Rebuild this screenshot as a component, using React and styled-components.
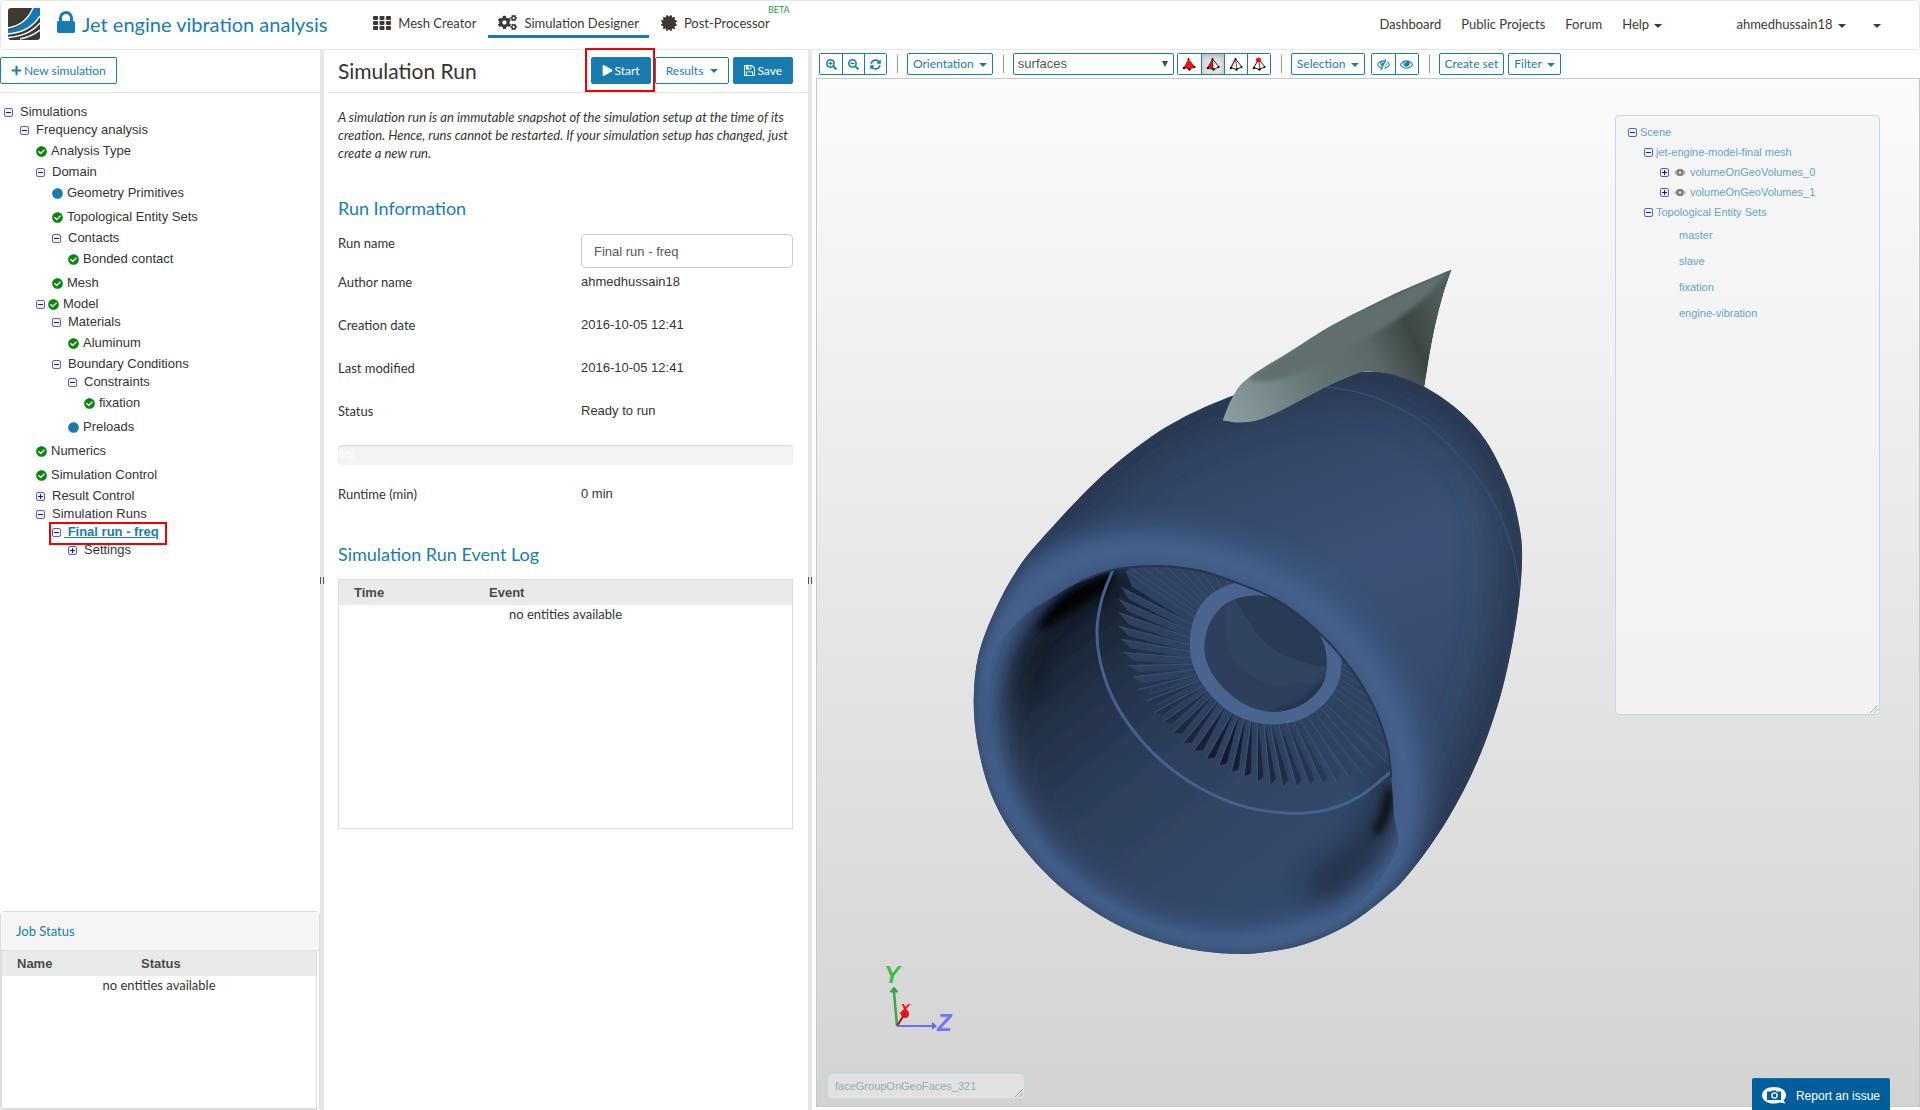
import React from 'react';
import styled, { createGlobalStyle, css } from 'styled-components';
import {
  FaCertificate,
  FaCheckCircle,
  FaCircle,
  FaCogs,
  FaPlay,
  FaPlus,
  FaSearchMinus,
  FaSearchPlus,
  FaSyncAlt,
} from 'react-icons/fa';

const BLUE = '#187cb0';
const DARK = '#3c3835';

const simulationTree = [
  { level: 0, name: 'Simulations', toggle: 'minus' },
  { level: 1, name: 'Frequency analysis', toggle: 'minus' },
  { level: 2, name: 'Analysis Type', status: 'done' },
  { level: 2, name: 'Domain', toggle: 'minus' },
  { level: 3, name: 'Geometry Primitives', status: 'open' },
  { level: 3, name: 'Topological Entity Sets', status: 'done' },
  { level: 3, name: 'Contacts', toggle: 'minus' },
  { level: 4, name: 'Bonded contact', status: 'done' },
  { level: 3, name: 'Mesh', status: 'done' },
  { level: 2, name: 'Model', toggle: 'minus', status: 'done' },
  { level: 3, name: 'Materials', toggle: 'minus' },
  { level: 4, name: 'Aluminum', status: 'done' },
  { level: 3, name: 'Boundary Conditions', toggle: 'minus' },
  { level: 4, name: 'Constraints', toggle: 'minus' },
  { level: 5, name: 'fixation', status: 'done' },
  { level: 4, name: 'Preloads', status: 'open' },
  { level: 2, name: 'Numerics', status: 'done' },
  { level: 2, name: 'Simulation Control', status: 'done' },
  { level: 2, name: 'Result Control', toggle: 'plus' },
  { level: 2, name: 'Simulation Runs', toggle: 'minus' },
  { level: 3, name: 'Final run - freq', toggle: 'minus', active: true },
  { level: 4, name: 'Settings', toggle: 'plus' },
];

const sceneTree = [
  { level: 0, name: 'Scene', toggle: 'minus' },
  { level: 1, name: 'jet-engine-model-final mesh', toggle: 'minus' },
  { level: 2, name: 'volumeOnGeoVolumes_0', toggle: 'plus', eye: true },
  { level: 2, name: 'volumeOnGeoVolumes_1', toggle: 'plus', eye: true },
  { level: 1, name: 'Topological Entity Sets', toggle: 'minus' },
  { level: 2, name: 'master' },
  { level: 2, name: 'slave' },
  { level: 2, name: 'fixation' },
  { level: 2, name: 'engine-vibration' },
];

const runInfo = [
  ['Author name', 'ahmedhussain18'],
  ['Creation date', '2016-10-05 12:41'],
  ['Last modified', '2016-10-05 12:41'],
  ['Status', 'Ready to run'],
];

export default function App() {
  return (
    <>
      <GlobalStyle />
      <Page>
        <Header />
        <Workspace>
          <Sidebar />
          <Splitter />
          <RunPanel />
          <Splitter />
          <Viewer />
        </Workspace>
      </Page>
    </>
  );
}

function Header() {
  return (
    <TopBar>
      <Logo />
      <ProjectTitle>
        <LockIcon />
        Jet engine vibration analysis
      </ProjectTitle>
      <MainNav>
        <NavTab href="#mesh">
          <GridIcon />
          Mesh Creator
        </NavTab>
        <NavTab href="#designer" $active>
          <FaCogs size={19} />
          Simulation Designer
        </NavTab>
        <NavTab href="#post">
          <FaCertificate size={16} />
          Post-Processor
          <Beta>BETA</Beta>
        </NavTab>
      </MainNav>
      <UserNav>
        <a href="#dashboard">Dashboard</a>
        <a href="#projects">Public Projects</a>
        <a href="#forum">Forum</a>
        <a href="#help">
          Help <Caret />
        </a>
        <UserLink href="#user">
          ahmedhussain18 <Caret />
        </UserLink>
        <a href="#more" aria-label="More">
          <Caret />
        </a>
      </UserNav>
    </TopBar>
  );
}

function Sidebar() {
  return (
    <SidePane>
      <PaneHead>
        <Button type="button">
          <FaPlus size={11} />
          New simulation
        </Button>
      </PaneHead>
      <Tree>
        {simulationTree.map((node) => (
          <TreeItem key={node.name} $level={node.level} $leaf={!node.toggle}>
            {node.toggle && <Toggle type={node.toggle} />}
            {node.status && (
              <Status $done={node.status === 'done'} $after={!!node.toggle}>
                {node.status === 'done' ? <FaCheckCircle /> : <FaCircle />}
              </Status>
            )}
            {node.active ? (
              <ActiveNode href="#run">&nbsp;{node.name}</ActiveNode>
            ) : (
              <NodeName $wide={!node.status}>{node.name}</NodeName>
            )}
            {node.active && <Highlight $tree />}
          </TreeItem>
        ))}
      </Tree>
      <JobStatus>
        <JobTitle>Job Status</JobTitle>
        <JobBody>
          <EntityTable columns={['Name', 'Status']} first={124} />
        </JobBody>
      </JobStatus>
    </SidePane>
  );
}

function RunPanel() {
  return (
    <RunPane>
      <PaneHead $inset>
        <Title>Simulation Run</Title>
        <Actions>
          <StartWrap>
            <Button type="button" $primary>
              <FaPlay size={11} />
              Start
            </Button>
            <Highlight />
          </StartWrap>
          <Button type="button">
            Results <Caret />
          </Button>
          <Button type="button" $primary>
            <SaveIcon />
            Save
          </Button>
        </Actions>
      </PaneHead>
      <RunBody>
        <Hint>
          A simulation run is an immutable snapshot of the simulation setup at the time of its
          creation. Hence, runs cannot be restarted. If your simulation setup has changed, just
          create a new run.
        </Hint>
        <SectionTitle>Run Information</SectionTitle>
        <Field $first>
          <label htmlFor="run-name">Run name</label>
          <TextInput id="run-name" defaultValue="Final run - freq" />
        </Field>
        {runInfo.map(([label, value]) => (
          <Field key={label}>
            <span>{label}</span>
            <Value>{value}</Value>
          </Field>
        ))}
        <Progress>0%</Progress>
        <Field>
          <span>Runtime (min)</span>
          <Value>0 min</Value>
        </Field>
        <SectionTitle $log>Simulation Run Event Log</SectionTitle>
        <LogBox>
          <EntityTable columns={['Time', 'Event']} first={135} />
        </LogBox>
      </RunBody>
    </RunPane>
  );
}

function EntityTable({ columns, first }) {
  return (
    <Table $first={first}>
      <thead>
        <tr>
          {columns.map((name) => (
            <th key={name}>{name}</th>
          ))}
        </tr>
      </thead>
      <tbody>
        <tr>
          <td colSpan={2}>no entities available</td>
        </tr>
      </tbody>
    </Table>
  );
}

function Viewer() {
  return (
    <ViewPane>
      <Toolbar>
        <Group>
          <Tool type="button" aria-label="Zoom in" $narrow>
            <FaSearchPlus size={11} />
          </Tool>
          <Tool type="button" aria-label="Zoom out" $narrow>
            <FaSearchMinus size={11} />
          </Tool>
          <Tool type="button" aria-label="Reset view" $narrow>
            <FaSyncAlt size={11} />
          </Tool>
        </Group>
        <Divider />
        <SmallButton type="button">
          Orientation <Caret />
        </SmallButton>
        <Divider />
        <SelectWrap>
          <select aria-label="Render mode" defaultValue="surfaces">
            <option value="surfaces">surfaces</option>
          </select>
        </SelectWrap>
        <Group $gap={3}>
          {['volume', 'face', 'edge', 'node'].map((kind) => (
            <Tool key={kind} type="button" aria-label={`Pick ${kind}`} $pressed={kind === 'face'}>
              <PickIcon kind={kind} />
            </Tool>
          ))}
        </Group>
        <Divider />
        <SmallButton type="button">
          Selection <Caret />
        </SmallButton>
        <Group $gap={6}>
          <Tool type="button" aria-label="Hide selection">
            <EyeIcon slash />
          </Tool>
          <Tool type="button" aria-label="Show selection">
            <EyeIcon />
          </Tool>
        </Group>
        <Divider />
        <SmallButton type="button">Create set</SmallButton>
        <SmallButton type="button" $next>
          Filter <Caret />
        </SmallButton>
      </Toolbar>
      <Canvas>
        <EngineModel />
        <ScenePanel>
          {sceneTree.map((node) => (
            <SceneItem key={node.name} $level={node.level} $leaf={!node.toggle}>
              {node.toggle && <Toggle type={node.toggle} />}
              {node.eye && <SceneEye />}
              <span>{node.name}</span>
            </SceneItem>
          ))}
          <Grip />
        </ScenePanel>
        <PickedFace>
          faceGroupOnGeoFaces_321
          <Grip />
        </PickedFace>
      </Canvas>
      <Report type="button">
        <ReportIcon />
        Report an issue
      </Report>
    </ViewPane>
  );
}

/* icons */

function Logo() {
  return (
    <svg width="32" height="32" viewBox="0 0 32 32" aria-label="Logo">
      <rect width="32" height="32" rx="3" fill="#3e3935" />
      <path d="M24 0h8v7C25 19 14 25 0 27v-5C12 20 20 12 24 0z" fill="#0f7ab5" />
      <path d="M25 0C20 12 12 18 0 20M32 8C25 19 14 25 0 26M32 15C24 24 15 28 0 29.500M32 22c-5 4-11 7-20 9" fill="none" stroke="#fff" strokeWidth="1.400" />
    </svg>
  );
}

function LockIcon() {
  return (
    <svg width="18" height="22" viewBox="320 128 1152 1408" fill="currentColor">
      <path d="M640 768h512v-192q0-106-75-181t-181-75-181 75-75 181v192zm832 96v576q0 40-28 68t-68 28h-960q-40 0-68-28t-28-68v-576q0-40 28-68t68-28h32v-192q0-184 132-316t316-132 316 132 132 316v192h32q40 0 68 28t28 68z" />
    </svg>
  );
}

function GridIcon() {
  return (
    <svg width="18" height="14" viewBox="0 0 18 14" fill="currentColor">
      {[0, 5, 10].map((y) =>
        [0, 6.5, 13].map((x) => <rect key={`${x}-${y}`} x={x} y={y} width="5" height="4" rx="1" />)
      )}
    </svg>
  );
}

function SaveIcon() {
  return (
    <svg width="11" height="11" viewBox="128 128 1536 1536" fill="currentColor">
      <path d="M512 1536h768v-384h-768v384zm896 0h128v-896q0-14-10-38.500t-20-34.500l-281-281q-10-10-34-20t-39-10v416q0 40-28 68t-68 28h-576q-40 0-68-28t-28-68v-416h-128v1280h128v-416q0-40 28-68t68-28h832q40 0 68 28t28 68v416zm-384-928v-320q0-13-9.500-22.500t-22.500-9.500h-192q-13 0-22.500 9.500t-9.500 22.500v320q0 13 9.500 22.500t22.500 9.500h192q13 0 22.500-9.500t9.500-22.500zm640 32v928q0 40-28 68t-68 28h-1344q-40 0-68-28t-28-68v-1344q0-40 28-68t68-28h928q40 0 88 20t76 48l280 280q28 28 48 76t20 88z" />
    </svg>
  );
}

function EyeIcon({ slash }) {
  return (
    <svg width="13" height="13" viewBox="0 64 1792 1792" fill="currentColor">
      <path d="M1664 960q-152-236-381-353 61 104 61 225 0 185-131.500 316.500t-316.500 131.500-316.500-131.500-131.500-316.500q0-121 61-225-229 117-381 353 133 205 333.500 326.500t434.500 121.500 434.500-121.500 333.500-326.500zm-720-384q0-20-14-34t-34-14q-125 0-214.500 89.500t-89.500 214.500q0 20 14 34t34 14 34-14 14-34q0-86 61-147t147-61q20 0 34-14t14-34zm848 384q0 34-20 69-140 230-376.500 368.500t-499.500 138.500-499.500-139-376.500-368q-20-35-20-69t20-69q140-229 376.500-368t499.500-139 499.500 139 376.500 368q20 35 20 69z" />
      {slash && (
        <>
          <path d="M660 1680 1340 260" stroke="#fff" strokeWidth="420" />
          <path d="M540 1680 1220 260" stroke="currentColor" strokeWidth="190" />
        </>
      )}
    </svg>
  );
}

function SceneEye() {
  return (
    <svg width="12" height="9" viewBox="0 0 12 9">
      <path d="M0 4.500C3-.5 9-.5 12 4.500 9 9.500 3 9.500 0 4.500z" fill="#bbbbb4" />
      <circle cx="6" cy="4.500" r="3.500" fill="#7c7c74" />
      <circle cx="6" cy="4.500" r="1.200" fill="#eee" />
    </svg>
  );
}

function PickIcon({ kind }) {
  const red = '#f30c0c';
  return (
    <svg width="14" height="14" viewBox="0 0 14 14" strokeLinejoin="round">
      <path d="M6.500 2 13 10 7 12.500 2 10.500z" fill={kind === 'volume' ? red : '#fff'} stroke="#222" strokeWidth={kind === 'volume' ? 0.4 : 1} />
      {kind === 'face' && <path d="M6.500 2 7 12 2 10.500z" fill={red} />}
      {kind === 'face' && <path d="M6.500 2 7 12" stroke="#222" />}
      {(kind === 'edge' || kind === 'node') && (
        <path d="M6.500 2 8 12" fill="none" stroke="#222" strokeWidth=".8" />
      )}
      {kind === 'edge' && <path d="M6.500 2 2 10.500" stroke={red} strokeWidth="1.200" />}
      {kind === 'node' && <circle cx="6.500" cy="3" r="2.500" fill={red} />}
      <circle cx="2" cy="11" r="1.300" fill="#111" />
      <circle cx="7.500" cy="12.500" r="1.200" fill="#111" />
      <circle cx="12.500" cy="10" r="1.100" fill="#111" />
      {kind !== 'node' && <circle cx="6.500" cy="2" r="1" fill="#111" />}
    </svg>
  );
}

function Toggle({ type }) {
  return (
    <ToggleButton type="button" aria-label={type === 'minus' ? 'Collapse' : 'Expand'}>
      <svg width="9" height="9" viewBox="0 0 9 9">
        <rect x=".5" y=".5" width="8" height="8" rx="1.500" fill="#f4f4fa" stroke="#5a62ae" />
        <path d={type === 'minus' ? 'M2 4.500h5' : 'M2 4.500h5M4.500 2v5'} stroke="#1010c8" />
      </svg>
    </ToggleButton>
  );
}

function Grip() {
  return (
    <GripSvg width="8" height="8" viewBox="0 0 8 8">
      <path d="M.5 7.500l7-7M4.500 7.500l3-3" stroke="#666" strokeDasharray="1 .6" />
    </GripSvg>
  );
}

function ReportIcon() {
  return (
    <svg width="24" height="17" viewBox="0 0 24 17">
      <path d="M12 0C19 0 24 3 24 8c0 2-1 4-2.500 5.500L23.500 16.500 18 15.500C16.500 16 14 16.500 12 16.500 5 16.500 0 13 0 8.200S5 0 12 0z" fill="#fff" />
      <path d="M5 4.500h4l1-1h4v1h5v8.500H5z" fill="#005e9b" />
      <circle cx="12.500" cy="8.500" r="2.600" fill="none" stroke="#fff" strokeWidth="1.400" />
    </svg>
  );
}

/* engine model */

// model space is stretched a little against the canvas
const place = ([x, y]) => [133 + x * 0.3827, 171 + y * 0.4592];
const fmt = ([x, y]) => `${x.toFixed(1)} ${y.toFixed(1)}`;

// Catmull-Rom spline through the given points
function curve(points, closed = false) {
  const p = points.map(place);
  const n = p.length;
  const at = (i) => (closed ? p[(i + n) % n] : p[Math.max(0, Math.min(n - 1, i))]);
  let d = `M${fmt(p[0])}`;
  for (let i = 0; i < (closed ? n : n - 1); i += 1) {
    const [a, b, c, e] = [at(i - 1), at(i), at(i + 1), at(i + 2)];
    const c1 = [b[0] + (c[0] - a[0]) / 6, b[1] + (c[1] - a[1]) / 6];
    const c2 = [c[0] - (e[0] - b[0]) / 6, c[1] - (e[1] - b[1]) / 6];
    d += `C${fmt(c1)} ${fmt(c2)} ${fmt(c)}`;
  }
  return closed ? `${d}Z` : d;
}

// several splines in a row, with a sharp corner where they meet
const outline = (...parts) =>
  `${parts.map((points, i) => (i ? curve(points).replace('M', 'L') : curve(points))).join('')}Z`;

const poly = (points) => `M${points.map((pt) => fmt(place(pt))).join('L')}Z`;

const hull = curve([
  [62, 980], [75, 880], [120, 780], [180, 690], [260, 610], [380, 505], [500, 422], [600, 369],
  [740, 317], [900, 275], [1090, 265], [1165, 272], [1240, 298], [1330, 350], [1400, 415],
  [1458, 510], [1485, 590], [1495, 670], [1481, 800], [1442, 960], [1380, 1110], [1300, 1240],
  [1200, 1358], [1130, 1415], [1040, 1470], [940, 1508], [850, 1526], [740, 1533], [600, 1518],
  [450, 1475], [300, 1395], [180, 1290], [110, 1190], [73, 1080],
], true);

const rim = curve([
  [88, 960], [122, 860], [190, 765], [290, 695], [410, 660], [540, 652], [700, 676], [850, 726],
  [990, 808], [1100, 920], [1165, 1040], [1188, 1180], [1165, 1305], [1085, 1410], [950, 1482],
  [760, 1516], [560, 1496], [400, 1436], [250, 1336], [140, 1198], [90, 1070],
], true);

const mouth = curve([
  [75, 980], [110, 880], [190, 800], [270, 755], [350, 718], [430, 696], [540, 688], [650, 698],
  [750, 725], [860, 765], [960, 830], [1050, 915], [1110, 1000], [1143, 1080], [1153, 1150],
  [1160, 1230], [1165, 1310], [1070, 1420], [920, 1490], [740, 1520], [560, 1500], [400, 1440],
  [240, 1330], [130, 1180], [85, 1060],
], true);

const cavity = curve([
  [145, 980], [172, 880], [240, 780], [340, 715], [430, 680], [540, 670], [700, 690], [860, 750],
  [1000, 840], [1110, 970], [1156, 1120], [1142, 1240], [1080, 1340], [940, 1425], [740, 1460],
  [560, 1440], [420, 1385], [280, 1285], [190, 1170], [148, 1060],
], true);

const casing = curve([
  [425, 698], [397, 760], [384, 830], [395, 905], [428, 980], [480, 1048], [552, 1112],
  [650, 1170], [760, 1210], [880, 1226], [980, 1220], [1070, 1190], [1152, 1136],
]);

const hubOuter = curve([
  [627, 860], [637, 803], [678, 752], [750, 724], [830, 718], [900, 740], [965, 785], [1010, 840],
  [1023, 892], [1014, 943], [978, 988], [918, 1022], [850, 1033], [790, 1027], [728, 1004],
  [670, 958], [636, 908],
], true);

const hubInner = curve([
  [665, 860], [676, 818], [710, 777], [760, 757], [820, 754], [885, 775], [945, 812], [975, 855],
  [984, 900], [974, 945], [930, 984], [870, 1004], [815, 1003], [755, 982], [700, 940], [671, 897],
], true);

const pylonTop = [[712, 371], [740, 317], [780, 278], [900, 215], [1000, 163], [1150, 100], [1311, 42]];
const pylonTail = [[1311, 42], [1288, 100], [1268, 165], [1252, 235], [1240, 298]];
const pylonFoot = [
  [1240, 298], [1160, 272], [1090, 265], [1050, 274], [985, 298], [900, 335], [820, 367],
  [760, 376], [712, 371],
];
const pylonCrease = [[1311, 42], [1230, 112], [1120, 176], [1000, 230], [910, 268], [840, 284], [790, 284]];

const tips = [
  [460, 700], [448, 735], [443, 762], [442, 790], [443, 820], [448, 848], [455, 877], [465, 905],
  [478, 930], [493, 957], [513, 982], [535, 1007], [558, 1027], [583, 1051], [610, 1073],
  [638, 1090], [670, 1108], [703, 1122], [735, 1137], [768, 1147], [803, 1157], [837, 1164],
  [870, 1167], [906, 1168], [940, 1167], [975, 1164], [1012, 1160], [1045, 1150], [1078, 1140],
  [1107, 1127], [1138, 1113], [1160, 1095],
];
const roots = [
  [638, 800], [632, 815], [630, 830], [628, 845], [627, 860], [627, 874], [628, 888], [632, 902],
  [636, 914], [642, 926], [650, 938], [660, 950], [670, 960], [682, 970], [698, 982], [714, 994],
  [738, 1006], [752, 1014], [768, 1020], [785, 1026], [803, 1030], [820, 1032], [836, 1033],
  [858, 1033], [880, 1030], [898, 1026], [915, 1022], [932, 1014], [950, 1004], [964, 994],
  [976, 984], [986, 974],
];
const hiddenBlades = [
  [[470, 692], [645, 790]], [[500, 690], [650, 782]], [[532, 690], [657, 774]],
  [[565, 690], [664, 766]], [[597, 692], [672, 758]], [[628, 696], [682, 750]],
  [[658, 700], [694, 744]], [[690, 706], [710, 737]], [[720, 714], [728, 731]],
  [[1150, 1068], [995, 965]], [[1150, 1040], [1003, 954]], [[1140, 1015], [1010, 944]],
  [[1125, 990], [1015, 932]], [[1105, 965], [1019, 920]], [[1085, 940], [1021, 910]],
  [[1060, 918], [1023, 900]], [[1045, 900], [1023, 888]],
];

const mix = (a, b, t) => [a[0] + (b[0] - a[0]) * t, a[1] + (b[1] - a[1]) * t];

function Blades() {
  return (
    <>
      <path
        d={poly([[638, 800], [460, 700], [480, 680], [700, 690], [960, 820], [1180, 1000], [1160, 1095], [986, 974], [900, 860]])}
        fill="#2f4260"
      />
      {tips.slice(0, -1).map((tip, i) => {
        const root = roots[i];
        const nextRoot = roots[i + 1];
        const notch = mix(mix(tip, tips[i + 1], 0.6), nextRoot, 0.12);
        const dark = i > 8 && i < 26 ? 1 - Math.abs(i - 17) / 10 : 0;
        return (
          <g key={tip.join()}>
            <path d={poly([root, tip, notch, nextRoot])} fill="#2e415e" />
            {dark > 0 && (
              <path d={poly([mix(root, nextRoot, 0.2), tip, mix(tip, notch, 0.8)])} fill="#0a111c" opacity={dark * 0.8} />
            )}
            <path d={poly([root, tip])} stroke="#40598a" strokeWidth="1" opacity=".6" />
          </g>
        );
      })}
      {hiddenBlades.map((line) => (
        <path key={line.join()} d={poly(line)} stroke="#3f5884" strokeWidth="1" opacity=".55" />
      ))}
    </>
  );
}

const Blur = ({ id, amount }) => (
  <filter id={id} filterUnits="userSpaceOnUse" x="0" y="0" width="1102" height="1027">
    <feGaussianBlur stdDeviation={amount} />
  </filter>
);

function EngineModel() {
  return (
    <ModelSvg viewBox="0 0 1102 1027" preserveAspectRatio="xMidYMid meet" aria-label="Jet engine model">
      <defs>
        <clipPath id="hull-clip">
          <path d={hull} />
        </clipPath>
        <clipPath id="mouth-clip">
          <path d={mouth} />
        </clipPath>
        <clipPath id="hub-clip">
          <path d={hubInner} />
        </clipPath>
        <clipPath id="pylon-clip">
          <path d={outline(pylonTop, pylonTail, pylonFoot)} />
        </clipPath>
        <linearGradient id="hull-fill" gradientUnits="userSpaceOnUse" x1="420" y1="280" x2="560" y2="640">
          <stop offset="0" stopColor="#2c3d58" />
          <stop offset=".3" stopColor="#334869" />
          <stop offset=".6" stopColor="#3b5276" />
          <stop offset="1" stopColor="#364b6d" />
        </linearGradient>
        <linearGradient id="cavity-fill" gradientUnits="userSpaceOnUse" x1="200" y1="560" x2="400" y2="820">
          <stop offset="0" stopColor="#151f2d" />
          <stop offset=".3" stopColor="#243349" />
          <stop offset=".6" stopColor="#2e415e" />
          <stop offset="1" stopColor="#33486a" />
        </linearGradient>
        <linearGradient id="pylon-side" gradientUnits="userSpaceOnUse" x1="410" y1="340" x2="630" y2="240">
          <stop offset="0" stopColor="#8b9d9e" />
          <stop offset=".2" stopColor="#788a8c" />
          <stop offset=".4" stopColor="#657474" />
          <stop offset=".66" stopColor="#5b6867" />
          <stop offset=".84" stopColor="#3c4645" />
          <stop offset="1" stopColor="#4f5b5a" />
        </linearGradient>
        <Blur id="soft2" amount="2" />
        <Blur id="soft4" amount="4" />
        <Blur id="soft8" amount="8" />
        <Blur id="soft12" amount="12" />
        <Blur id="soft24" amount="22" />
      </defs>

      <g clipPath="url(#hull-clip)">
        <path d={hull} fill="url(#hull-fill)" />
        <path
          d={curve([[200, 640], [500, 400], [800, 290], [1090, 255], [1260, 300], [1420, 430], [1495, 620], [1490, 800], [1440, 980], [1340, 1190], [1200, 1380]])}
          fill="none"
          stroke="#26354d"
          strokeWidth="46"
          filter="url(#soft24)"
        />
        <path d={rim} fill="none" stroke="#3f5a84" strokeWidth="46" filter="url(#soft12)" />
        <path d={rim} fill="none" stroke="#47638e" strokeWidth="16" filter="url(#soft8)" />
        <path d={hull} fill="none" stroke="#2a3a55" strokeWidth="4" filter="url(#soft4)" />
      </g>
      <path
        d={curve([[985, 298], [1100, 318], [1230, 372], [1350, 465], [1430, 565], [1473, 665], [1488, 735]])}
        fill="none"
        stroke="#3c5580"
        strokeWidth="1"
      />

      <g clipPath="url(#mouth-clip)" strokeLinecap="round">
        <path d={cavity} fill="url(#cavity-fill)" filter="url(#soft12)" />
        <path
          d={curve([[240, 825], [265, 785], [330, 738], [425, 706], [395, 745], [310, 790]], true)}
          fill="#000"
          stroke="#000"
          strokeWidth="3"
          filter="url(#soft4)"
        />
        <path
          d={curve([[200, 960], [225, 880], [300, 800], [400, 730]])}
          fill="none"
          stroke="#080d15"
          strokeWidth="18"
          opacity=".45"
          filter="url(#soft12)"
        />
        <path
          d={curve([[1160, 1140], [1140, 1230], [1070, 1320], [980, 1380]])}
          fill="none"
          stroke="#131c29"
          strokeWidth="36"
          opacity=".5"
          filter="url(#soft12)"
        />
        <path
          d={curve([[1148, 1180], [1138, 1225], [1116, 1265]])}
          fill="none"
          stroke="#000"
          strokeWidth="7"
          filter="url(#soft4)"
        />
        <path d={casing} fill="none" stroke="#45618f" strokeWidth="3" strokeLinecap="butt" />
        <Blades />
        <path d={hubOuter} fill="#48648f" />
        <path d={hubInner} fill="#2d3f5c" />
        <g clipPath="url(#hub-clip)">
          <path d={curve([[718, 760], [720, 840], [752, 905], [820, 942], [900, 945], [1000, 920], [1000, 740]])} fill="#30435f" />
          <path d={curve([[752, 750], [775, 800], [825, 855], [890, 887], [990, 898], [1010, 760], [870, 720]], true)} fill="#293a54" />
          <path d={curve([[870, 1012], [935, 995], [990, 945]])} fill="none" stroke="#121b29" strokeWidth="8" filter="url(#soft4)" />
        </g>
      </g>
      <path
        d={curve([[340, 722], [430, 696], [540, 688], [650, 698], [750, 725], [860, 765], [960, 830], [1050, 915], [1110, 1000], [1143, 1080], [1153, 1150]])}
        fill="none"
        stroke="#263651"
        strokeWidth="2"
      />

      <g clipPath="url(#pylon-clip)">
        <path d={outline(pylonTop, pylonTail, pylonFoot)} fill="url(#pylon-side)" />
        <path d={outline(pylonTop.slice(2), pylonCrease)} fill="#606e6f" filter="url(#soft2)" />
      </g>

      <g transform="translate(80 943)" fontFamily="Liberation Sans, sans-serif" fontStyle="italic" fontWeight="bold">
        <path d="M0 4-3-30" stroke="#3fa344" strokeWidth="2.500" />
        <path d="M-7-30-3-35 1-30z" fill="#3f9d46" stroke="#3f9d46" />
        <path d="M0 4 7-7" stroke="#a01818" strokeWidth="2" />
        <circle cx="8" cy="-8" r="4" fill="#e01414" />
        <path d="M0 4h36" stroke="#6c6cf4" strokeWidth="2" />
        <path d="M35 0l5 4-5 4z" fill="#6868e0" />
        <text x="-13" y="-39" fontSize="24" fill="#3fbf45">Y</text>
        <text x="3" y="-8" fontSize="15" fill="#ee1515">X</text>
        <text x="40" y="9" fontSize="24" fill="#7373ff">Z</text>
      </g>
    </ModelSvg>
  );
}

/* styles */

const GlobalStyle = createGlobalStyle`
  *,
  *::before,
  *::after {
    box-sizing: border-box;
  }

  body {
    margin: 0;
    background: #fff;
    color: #333;
    font: 13px/18px Lato, sans-serif;
  }

  button,
  input,
  select {
    font: inherit;
    color: inherit;
  }

  a {
    color: inherit;
    text-decoration: none;
  }
`;

const Page = styled.div`
  display: flex;
  flex-direction: column;
  min-height: 100vh;
`;

const TopBar = styled.header`
  display: flex;
  align-items: center;
  min-height: 50px;
  padding: 0 38px 2px 7px;
  border: 1px solid #e7e7e7;
  border-radius: 4px;
`;

const ProjectTitle = styled.h1`
  display: flex;
  align-items: center;
  gap: 7px;
  margin: 0 0 0 17px;
  color: ${BLUE};
  font-size: 20px;
  font-weight: 400;
  line-height: 26px;

  svg {
    margin-bottom: 4px;
  }
`;

const MainNav = styled.nav`
  display: flex;
  gap: 2px;
  margin-left: 36px;
`;

const NavTab = styled.a`
  position: relative;
  display: flex;
  align-items: center;
  gap: 7px;
  height: 28px;
  padding: 0 10px;
  border-bottom: 3px solid ${(props) => (props.$active ? BLUE : 'transparent')};
  color: ${DARK};
`;

const Beta = styled.sup`
  position: absolute;
  top: -6px;
  right: -10px;
  color: #1f9a3c;
  font-size: 9px;
  line-height: 12px;
`;

const UserNav = styled.nav`
  display: flex;
  gap: 20px;
  margin-left: auto;
  color: ${DARK};
`;

const UserLink = styled.a`
  margin: 0 5px 0 54px;
`;

const Caret = styled.i`
  display: inline-block;
  border: 4px solid transparent;
  border-top-color: currentColor;
  border-bottom: 0;
  margin-left: 2px;
  vertical-align: middle;
`;

const Workspace = styled.main`
  display: flex;
  flex: 1;
`;

const Splitter = styled.div`
  display: flex;
  align-items: center;
  flex: 0 0 4px;
  background: #e6e6e6;

  &::after {
    content: '';
    width: 4px;
    height: 7px;
    border: 1px solid #555;
    border-width: 0 1px;
  }
`;

const SidePane = styled.aside`
  display: flex;
  flex-direction: column;
  flex: 0 0 320px;
`;

const PaneHead = styled.div`
  display: flex;
  align-items: center;
  height: 43px;
  padding-bottom: 1px;
  border-bottom: 1px solid #e3e3e3;

  ${(props) =>
    props.$inset &&
    css`
      margin-left: 4px;
      padding: 0 15px 1px 10px;
    `}
`;

const Button = styled.button`
  display: flex;
  align-items: center;
  gap: 2px;
  height: 27px;
  padding: 0 10px;
  border: 1px solid ${BLUE};
  border-radius: 2px;
  background: ${(props) => (props.$primary ? BLUE : '#fff')};
  color: ${(props) => (props.$primary ? '#fff' : BLUE)};
  font-size: 12px;

  ${Caret} {
    margin-left: 5px;
  }
`;

const Tree = styled.ul`
  margin: 0;
  padding: 10px 0;
  list-style: none;
  font-family: 'Liberation Sans', sans-serif;
`;

const TreeItem = styled.li`
  position: relative;
  display: flex;
  align-items: center;
  height: ${(props) => (props.$leaf ? 24 : 18)}px;
  padding-left: ${(props) => 4 + props.$level * 16}px;
`;

const ToggleButton = styled.button`
  display: block;
  flex: 0 0 9px;
  margin-top: 1px;
  padding: 0;
  border: 0;
  background: none;

  svg {
    display: block;
  }
`;

const Status = styled.span`
  display: flex;
  margin-left: ${(props) => (props.$after ? 3 : 0)}px;
  color: ${(props) => (props.$done ? '#07850c' : BLUE)};
  font-size: 11px;
`;

const NodeName = styled.span`
  margin-left: ${(props) => (props.$wide ? 7 : 4)}px;
`;

const ActiveNode = styled.a`
  margin-left: 3px;
  color: ${BLUE};
  font-weight: 700;
  text-decoration: underline;
`;

const Highlight = styled.span`
  position: absolute;
  inset: ${(props) => (props.$tree ? '-1px auto -4px 49px' : '-9px -4px -8px -6px')};
  width: ${(props) => (props.$tree ? '118px' : 'auto')};
  border: 2px solid #f50000;
  pointer-events: none;
`;

const JobStatus = styled.section`
  display: flex;
  flex-direction: column;
  height: 199px;
  margin-top: auto;
  border: 1px solid #ddd;
  border-radius: 4px;
`;

const JobTitle = styled.h2`
  margin: 0;
  padding: 10px 15px;
  border-bottom: 1px solid #ddd;
  background: #f5f5f5;
  color: ${BLUE};
  font-size: 13px;
  font-weight: 400;
  line-height: 18px;
`;

const JobBody = styled.div`
  flex: 1;
  margin-right: 2px;
  border: 1px solid #ddd;
  border-top: 0;
`;

const Table = styled.table`
  width: 100%;
  border-collapse: collapse;
  table-layout: fixed;

  thead tr {
    height: 25px;
    background: #eaeaea;
  }

  th {
    padding: 0 0 0 15px;
    color: #4a4a4a;
    font: bold 13px/18px 'Liberation Sans', sans-serif;
    text-align: left;
  }

  th:first-child {
    width: ${(props) => props.$first}px;
  }

  td {
    padding: 0;
    text-align: center;
  }
`;

const RunPane = styled.section`
  flex: 0 0 484px;
`;

const Title = styled.h2`
  margin: 0;
  font-size: 21px;
  font-weight: 400;
  line-height: 26px;
`;

const Actions = styled.div`
  display: flex;
  gap: 4px;
  margin-left: auto;
`;

const StartWrap = styled.div`
  position: relative;
`;

const RunBody = styled.div`
  padding: 15px 15px 15px 14px;
`;

const Hint = styled.p`
  margin: 0;
  font-style: italic;
`;

const SectionTitle = styled.h3`
  margin: ${(props) => (props.$log ? '13px 0 12px' : '33px 0 13px')};
  color: ${BLUE};
  font-size: 18px;
  font-weight: 400;
  line-height: 26px;
`;

const Field = styled.div`
  display: grid;
  grid-template-columns: 243px 1fr;
  align-items: start;
  min-height: ${(props) => (props.$first ? 39 : 43)}px;
`;

const Value = styled.span`
  font-family: 'Liberation Sans', sans-serif;
`;

const TextInput = styled.input`
  width: 100%;
  height: 34px;
  padding: 0 12px;
  border: 1px solid #ccc;
  border-radius: 4px;
  color: #555;
  font-family: 'Liberation Sans', sans-serif;
`;

const Progress = styled.div`
  height: 20px;
  margin-bottom: 20px;
  border-radius: 4px;
  background: #f4f4f4;
  box-shadow: inset 0 1px 2px rgba(0, 0, 0, 0.12);
  color: #fff;
  font-size: 12px;
  line-height: 20px;
`;

const LogBox = styled.div`
  min-height: 250px;
  border: 1px solid #ddd;
`;

const ViewPane = styled.section`
  display: flex;
  flex-direction: column;
  flex: 1;
  min-width: 0;
  padding: 0 0 3px 4px;
`;

const Toolbar = styled.div`
  display: flex;
  align-items: center;
  height: 28px;
  padding-left: 3px;
  color: ${BLUE};
`;

const Group = styled.div`
  display: flex;
  margin-left: ${(props) => props.$gap || 0}px;
  border: 1px solid ${BLUE};
  border-radius: 2px;
`;

const Tool = styled.button`
  display: flex;
  align-items: center;
  justify-content: center;
  width: ${(props) => (props.$narrow ? 22 : 23)}px;
  height: 20px;
  padding: 0;
  border: 0;
  background: ${(props) => (props.$pressed ? '#e0e0e0' : '#fff')};
  box-shadow: ${(props) => (props.$pressed ? 'inset 0 2px 4px rgba(0, 0, 0, 0.2)' : 'none')};

  & + & {
    border-left: 1px solid ${BLUE};
  }
`;

const Divider = styled.span`
  width: 1px;
  height: 18px;
  margin: 0 9px 0 10px;
  background: #999;
`;

const SmallButton = styled.button`
  height: 22px;
  padding: 0 5px;
  border: 1px solid ${BLUE};
  border-radius: 2px;
  margin-left: ${(props) => (props.$next ? 4 : 0)}px;
  background: #fff;
  font-size: 12px;
  white-space: nowrap;
`;

const SelectWrap = styled.span`
  position: relative;
  width: 161px;

  select {
    display: block;
    width: 100%;
    height: 22px;
    padding: 0 4px;
    border: 1px solid ${BLUE};
    border-radius: 2px;
    appearance: none;
    background: #fff;
    color: #555;
    font-family: 'Liberation Sans', sans-serif;
  }

  &::after {
    content: '';
    position: absolute;
    top: 8px;
    right: 6px;
    border: 3px solid transparent;
    border-top: 6px solid #444;
    border-bottom: 0;
    pointer-events: none;
  }
`;

const Canvas = styled.div`
  position: relative;
  flex: 1;
  border: 1px solid #c8c8c8;
  background: linear-gradient(#fbfbfb, #d3d3d3);
`;

const ModelSvg = styled.svg`
  position: absolute;
  width: 100%;
  height: 100%;
`;

const ScenePanel = styled.ul`
  position: absolute;
  top: 36px;
  right: 39px;
  width: 265px;
  height: 600px;
  margin: 0;
  padding: 6px 12px;
  border: 1px solid #b9dce6;
  border-radius: 4px;
  background: rgba(245, 245, 245, 0.85);
  list-style: none;
  color: #68a4c2;
  font: 11px/18px 'Liberation Sans', sans-serif;
`;

const SceneItem = styled.li`
  display: flex;
  align-items: center;
  gap: 3px;
  height: ${(props) => (props.$leaf ? 26 : 20)}px;
  padding-left: ${(props) => props.$level * 16 + (props.$leaf ? 19 : 0)}px;

  > svg {
    margin: 0 1px 0 2px;
  }
`;

const GripSvg = styled.svg`
  position: absolute;
  right: 1px;
  bottom: 1px;
`;

const PickedFace = styled.div`
  position: absolute;
  left: 10px;
  bottom: 7px;
  width: 198px;
  padding: 3px 7px;
  border: 1px solid #c5d8e0;
  border-radius: 4px;
  background: #e1e1e1;
  color: #92adba;
  font: 11px/18px 'Liberation Sans', sans-serif;
`;

const Report = styled.button`
  position: fixed;
  right: 30px;
  bottom: 0;
  display: flex;
  align-items: center;
  gap: 10px;
  height: 32px;
  padding: 2px 10px 0;
  border: 0;
  border-top: 1px solid #0a70b0;
  border-radius: 2px 2px 0 0;
  background: #005e9b;
  color: #fff;
  font: 12px/18px 'Liberation Sans', sans-serif;
`;
